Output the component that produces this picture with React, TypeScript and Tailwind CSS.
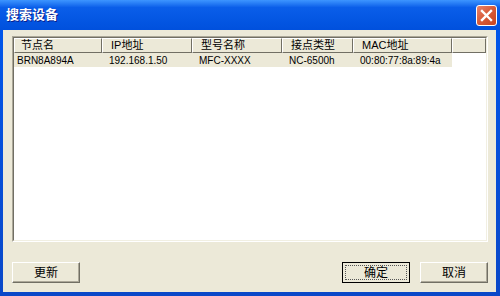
/** XP-style "search devices" dialog. */
const cjk = "font-['Liberation_Sans','Noto_Sans_CJK_SC',sans-serif]";

const cols = [
  { label: "节点名", w: "w-[88px]", head: "pl-[6px]", cell: "pl-[3px]", value: "BRN8A894A" },
  { label: "IP地址", w: "w-[90px]", head: "pl-[8px]", cell: "pl-[7px]", value: "192.168.1.50" },
  { label: "型号名称", w: "w-[90px]", head: "pl-[8px]", cell: "pl-[7px]", value: "MFC-XXXX" },
  { label: "接点类型", w: "w-[71px]", head: "pl-[8px]", cell: "pl-[7px]", value: "NC-6500h" },
  { label: "MAC地址", w: "w-[99px]", head: "pl-[8px]", cell: "pl-[7px]", value: "00:80:77:8a:89:4a" },
];

function Btn({ label, primary }: { label: string; primary?: boolean }) {
  return (
    <button
      className={`h-[21px] w-[68px] text-[12px] leading-none text-black ${cjk} ${
        primary
          ? "border border-black bg-[#ece9d8] p-[2px]"
          : "border border-t-white border-l-white border-b-[#716f64] border-r-[#716f64] bg-[#ece9d8] shadow-[inset_-1px_-1px_0_#aca899]"
      }`}
    >
      {primary ? (
        <span className="flex h-full w-full items-center justify-center border border-dotted border-[#555]">{label}</span>
      ) : (
        label
      )}
    </button>
  );
}

export default function App() {
  return (
    <div className="flex h-[296px] w-[500px] flex-col bg-gradient-to-b from-[#0058ee] to-[#0a48c8]">
      {/* title bar */}
      <div className="flex h-[30px] shrink-0 items-center bg-gradient-to-b from-[#3d95ff] via-[#0a5ee9] via-25% to-[#0050dd] pl-[6px] pr-[3px]">
        <span className={`text-[13px] font-bold text-white [text-shadow:1px_1px_0_#0a1e8c] ${cjk}`}>搜索设备</span>
        <div className="ml-auto flex h-[21px] w-[21px] items-center justify-center rounded-[3px] border border-white bg-gradient-to-br from-[#e8826a] via-[#d85a37] to-[#c7441f]">
          <svg width="13" height="13" viewBox="0 0 13 13">
            <path d="M2 2 L11 11 M11 2 L2 11" stroke="white" strokeWidth="2.4" strokeLinecap="square" />
          </svg>
        </div>
      </div>

      {/* body */}
      <div className="mb-[4px] ml-[3px] mr-[4px] flex flex-1 flex-col bg-[#ece9d8] pb-[9px] pl-[9px] pr-[8px] pt-[6px]">
        <div className="flex-1 border border-t-[#aca899] border-l-[#aca899] border-b-white border-r-white">
          <div className="h-full border border-t-[#716f64] border-l-[#716f64] border-b-[#f1efe2] border-r-[#f1efe2] bg-white">
            <div className={`flex h-[15px] text-[11px] leading-[13px] text-black ${cjk}`}>
              {cols.map((c) => (
                <div
                  key={c.label}
                  className={`${c.w} ${c.head} flex shrink-0 items-center border border-t-white border-l-white border-b-[#716f64] border-r-[#716f64] bg-[#ece9d8]`}
                >
                  {c.label}
                </div>
              ))}
              <div className="flex-1 border border-t-white border-l-white border-b-[#716f64] border-r-[#716f64] bg-[#ece9d8]" />
            </div>
            <div className={`flex h-[14px] text-[10px] text-black ${cjk}`}>
              {cols.map((c) => (
                <div key={c.label} className={`${c.w} ${c.cell} flex shrink-0 items-center bg-[#ece9d8]`}>
                  {c.value}
                </div>
              ))}
            </div>
          </div>
        </div>

        <div className="mt-[20px] flex items-center">
          <Btn label="更新" />
          <div className="ml-auto flex gap-[10px]">
            <Btn label="确定" primary />
            <Btn label="取消" />
          </div>
        </div>
      </div>
    </div>
  );
}
